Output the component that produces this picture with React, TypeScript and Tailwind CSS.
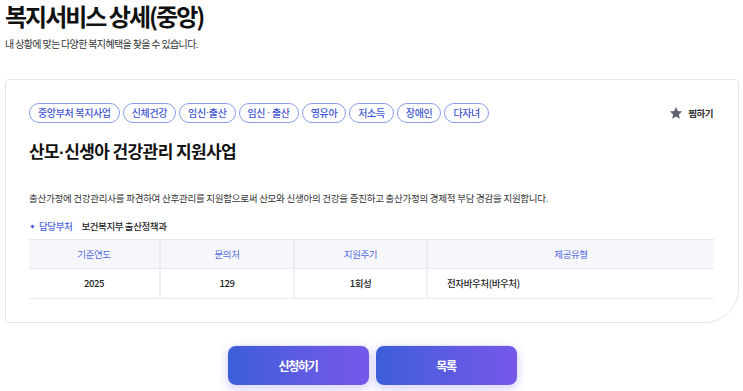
import React from "react";

const tags = ["중앙부처 복지사업", "신체건강", "임신·출산", "임신 · 출산", "영유아", "저소득", "장애인", "다자녀"];

function Dotted({ text }: { text: string }) {
  const parts = text.split("·");
  return (
    <>
      {parts.map((p, i) => (
        <React.Fragment key={i}>
          {p}
          {i < parts.length - 1 && <span className="font-['Liberation_Sans',sans-serif]">·</span>}
        </React.Fragment>
      ))}
    </>
  );
}

function Star() {
  return (
    <svg width="14" height="14" viewBox="0 0 24 24" aria-hidden="true">
      <path
        d="M12 1.8l3.1 6.9 7.4.7-5.6 5 1.7 7.4L12 18l-6.6 3.8 1.7-7.4-5.6-5 7.4-.7z"
        fill="#5e6174"
      />
    </svg>
  );
}

export default function App() {
  return (
    <div className="min-h-screen bg-white font-['Noto_Sans_CJK_KR','Noto_Sans',sans-serif] text-[#111]">
      <div className="px-[5px]">
        <h1 className="text-[24px] leading-[32px] font-bold tracking-[-2px] text-[#111]">
          복지서비스 상세(중앙)
        </h1>
        <p className="mt-[5px] text-[10px] leading-[14px] tracking-[-0.65px] text-[#333]">
          내 상황에 맞는 다양한 복지혜택을 찾을 수 있습니다.
        </p>
      </div>

      <div className="ml-[5px] mr-[4px] mt-[28px] rounded-tl-[4px] rounded-tr-[4px] rounded-bl-[4px] rounded-br-[34px] border border-[#e6e6e6] bg-white pl-[23px] pr-[24px] pt-[23px] pb-[23px]">
        <div className="flex items-center justify-between">
          <div className="flex items-center gap-[3px]">
            {tags.map((t) => (
              <span
                key={t}
                className="flex h-[20px] items-center rounded-full border border-[#8a9cf0] px-[8px] text-[10px] leading-[18px] font-medium tracking-[-0.35px] text-[#3f56d2] whitespace-pre"
              >
                <Dotted text={t} />
              </span>
            ))}
          </div>
          <button className="flex items-center gap-[5px] pr-[1px] text-[9.5px] font-bold tracking-[-0.5px] text-[#333]">
            <Star />
            <span>찜하기</span>
          </button>
        </div>

        <h2 className="mt-[16px] text-[17px] leading-[24px] font-bold tracking-[-0.6px] text-[#111]">
          <Dotted text="산모·신생아 건강관리 지원사업" />
        </h2>

        <p className="mt-[26px] text-[9.5px] leading-[14px] tracking-[-0.25px] text-[#333]">
          출산가정에 건강관리사를 파견하여 산후관리를 지원함으로써 산모와 신생아의 건강을 증진하고 출산가정의 경제적 부담 경감을 지원합니다.
        </p>

        <div className="mt-[14px] flex items-center text-[9.5px] leading-[14px] tracking-[-0.4px]">
          <span className="ml-[2px] mr-[5px] h-[3px] w-[3px] rotate-45 bg-[#4a63dc]" />
          <span className="font-medium text-[#4a63dc]">담당부처</span>
          <span className="ml-[9px] font-medium text-[#222]">보건복지부 출산정책과</span>
        </div>

        <div className="mt-[6px] border-t border-[#e8eaf0] text-[9.5px] tracking-[-0.4px]">
          <div className="grid grid-cols-[132px_134px_133px_1fr] bg-[#f5f7fb] h-[29px] border-b border-[#e8eaf0]">
            {["기준연도", "문의처", "지원주기", "제공유형"].map((h, i) => (
              <div
                key={h}
                className={`flex items-center justify-center text-[#566ce0] ${i < 3 ? "border-r-2 border-[#e9ebf1]" : ""}`}
              >
                {h}
              </div>
            ))}
          </div>
          <div className="grid grid-cols-[132px_134px_133px_1fr] h-[30px] border-b border-[#e8eaf0] font-medium text-[#222]">
            <div className="flex items-center justify-center border-r-2 border-[#eef0f4]">2025</div>
            <div className="flex items-center justify-center border-r-2 border-[#eef0f4]">129</div>
            <div className="flex items-center justify-center border-r-2 border-[#eef0f4]">1회성</div>
            <div className="flex items-center pl-[19px]">전자바우처(바우처)</div>
          </div>
        </div>
      </div>

      <div className="mt-[22px] flex justify-center gap-[5px] pl-[1px]">
        <button className="h-[41px] w-[143px] rounded-[9px] border border-[#e4e6ff] bg-linear-to-r from-[#3b5ed8] to-[#7657ea] text-[12px] font-bold tracking-[-1.3px] text-white shadow-[0_3px_10px_rgba(110,100,230,0.3)]">
          신청하기
        </button>
        <button className="h-[41px] w-[143px] rounded-[9px] border border-[#e4e6ff] bg-linear-to-r from-[#3b5ed8] to-[#7657ea] text-[12px] font-bold tracking-[-1.3px] text-white shadow-[0_3px_10px_rgba(110,100,230,0.3)]">
          목록
        </button>
      </div>
    </div>
  );
}
